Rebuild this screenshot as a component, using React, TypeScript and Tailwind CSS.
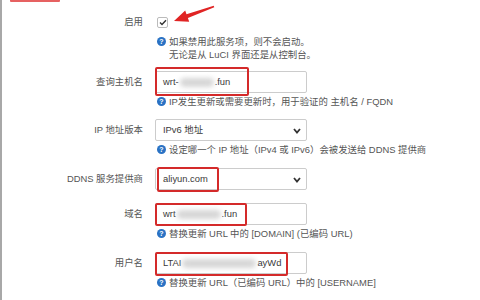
import React from "react";

const font = { fontFamily: '"Liberation Sans", "Noto Sans CJK SC", sans-serif' };

const Help: React.FC<{ children: React.ReactNode }> = ({ children }) => (
    <div className="flex items-start gap-[3px] pl-[2px] mt-[2px] text-[9.4px] leading-[13px] text-[#555]">
        <span className="mt-[2px] w-[9px] h-[9px] shrink-0 rounded-full bg-[#2a72c4] text-white text-[7px] leading-none font-bold flex items-center justify-center">?</span>
        <span>{children}</span>
    </div>
);

const Blur: React.FC<{ w: string }> = ({ w }) => (
    <span className={`inline-block ${w} h-[9px] mx-[1px] rounded-full bg-[#d6d6d6] blur-[2.5px] align-middle`}></span>
);

const Chevron = () => (
    <svg className="absolute right-[5px] top-[8px]" width="8" height="6" viewBox="0 0 8 6">
        <polyline points="1,1 4,4.5 7,1" fill="none" stroke="#333" strokeWidth="1.8" />
    </svg>
);

const Row: React.FC<{ label: string; children: React.ReactNode; className?: string }> = ({ label, children, className }) => (
    <div className={`flex items-start ${className ?? ""}`}>
        <div className="w-[141px] h-[22px] flex items-center justify-end text-[9.4px] text-[#555]">{label}</div>
        <div className="ml-[12px] flex flex-col">{children}</div>
    </div>
);

export default function App() {
    return (
        <div className="relative w-[480px] h-[300px] overflow-hidden bg-white border-l-2 border-[#a8a8a8]" style={font}>
            {/* bottom of the red box around the tab above */}
            <div className="ml-[8px] w-[50px] h-[2px] bg-[#e03a3a] rounded-b-[1px] opacity-80"></div>

            <Row label="启用" className="mt-[9px]">
                <div className="h-[22px] flex items-center">
                    <span className="ml-[2px] w-[11px] h-[11px] border border-[#bbb] rounded-[2px] flex items-center justify-center bg-white">
                        <svg width="8" height="7" viewBox="0 0 8 7">
                            <polyline points="1,3.5 3,5.5 7,1.2" fill="none" stroke="#333" strokeWidth="1.4" />
                        </svg>
                    </span>
                </div>
                <Help>
                    如果禁用此服务项，则不会启动。
                    <br />
                    无论是从 LuCI 界面还是从控制台。
                </Help>
            </Row>

            <Row label="查询主机名" className="mt-[10px]">
                <div className="relative w-[152px] h-[22px] border border-[#ccc] rounded-[2px] px-[7px] flex items-center text-[9.4px] text-[#3a3a3a]">
                    wrt-<Blur w="w-[34px]" />.fun
                    <div className="absolute -left-[1px] -top-[5px] w-[94px] h-[29px] border-2 border-[#d42a2a] rounded-[2px]"></div>
                </div>
                <Help>IP发生更新或需要更新时，用于验证的 主机名 / FQDN</Help>
            </Row>

            <Row label="IP 地址版本" className="mt-[11px]">
                <div className="relative w-[152px] h-[22px] border border-[#ccc] rounded-[2px] px-[7px] flex items-center text-[9.4px] text-[#3a3a3a]">
                    IPv6 地址
                    <Chevron />
                </div>
                <Help>设定哪一个 IP 地址（IPv4 或 IPv6）会被发送给 DDNS 提供商</Help>
            </Row>

            <Row label="DDNS 服务提供商" className="mt-[12px]">
                <div className="relative w-[152px] h-[22px] border border-[#ccc] rounded-[2px] px-[7px] flex items-center text-[9.4px] text-[#3a3a3a]">
                    aliyun.com
                    <Chevron />
                    <div className="absolute left-[1px] -top-[2px] w-[62px] h-[25px] border-2 border-[#d42a2a] rounded-[2px]"></div>
                </div>
            </Row>

            <Row label="域名" className="mt-[13px]">
                <div className="relative w-[152px] h-[22px] border border-[#ccc] rounded-[2px] px-[7px] flex items-center text-[9.4px] text-[#3a3a3a]">
                    wrt<Blur w="w-[44px]" />.fun
                    <div className="absolute -left-[1px] -top-[1px] w-[92px] h-[23px] border-2 border-[#d42a2a] rounded-[2px]"></div>
                </div>
                <Help>替换更新 URL 中的 [DOMAIN] (已编码 URL)</Help>
            </Row>

            <Row label="用户名" className="mt-[12px]">
                <div className="relative w-[152px] h-[22px] border border-[#ccc] rounded-[2px] px-[7px] flex items-center text-[9.4px] text-[#3a3a3a]">
                    LTAI<Blur w="w-[74px]" />ayWd
                    <div className="absolute -left-[1px] -top-[1px] w-[133px] h-[24px] border-2 border-[#d42a2a] rounded-[2px]"></div>
                </div>
                <Help>替换更新 URL（已编码 URL）中的 [USERNAME]</Help>
            </Row>

            {/* next row, only the top of its red box is in view */}
            <Row label="" className="mt-[11px]">
                <div className="relative w-[152px] h-[22px] mt-[2px]">
                    <div className="absolute -left-[1px] -top-[2px] w-[116px] h-[24px] border-2 border-[#d42a2a] rounded-[2px]"></div>
                </div>
            </Row>

            {/* annotation arrow */}
            <svg className="absolute left-[170px] top-[4px]" width="46" height="22" viewBox="170 4 46 22">
                <polygon
                    points="172,21 187.2,21.8 185.9,18.1 212.3,7.3 211.7,5.8 184.5,14.3 183.2,10.6"
                    fill="#e02424"
                />
            </svg>
        </div>
    );
}
